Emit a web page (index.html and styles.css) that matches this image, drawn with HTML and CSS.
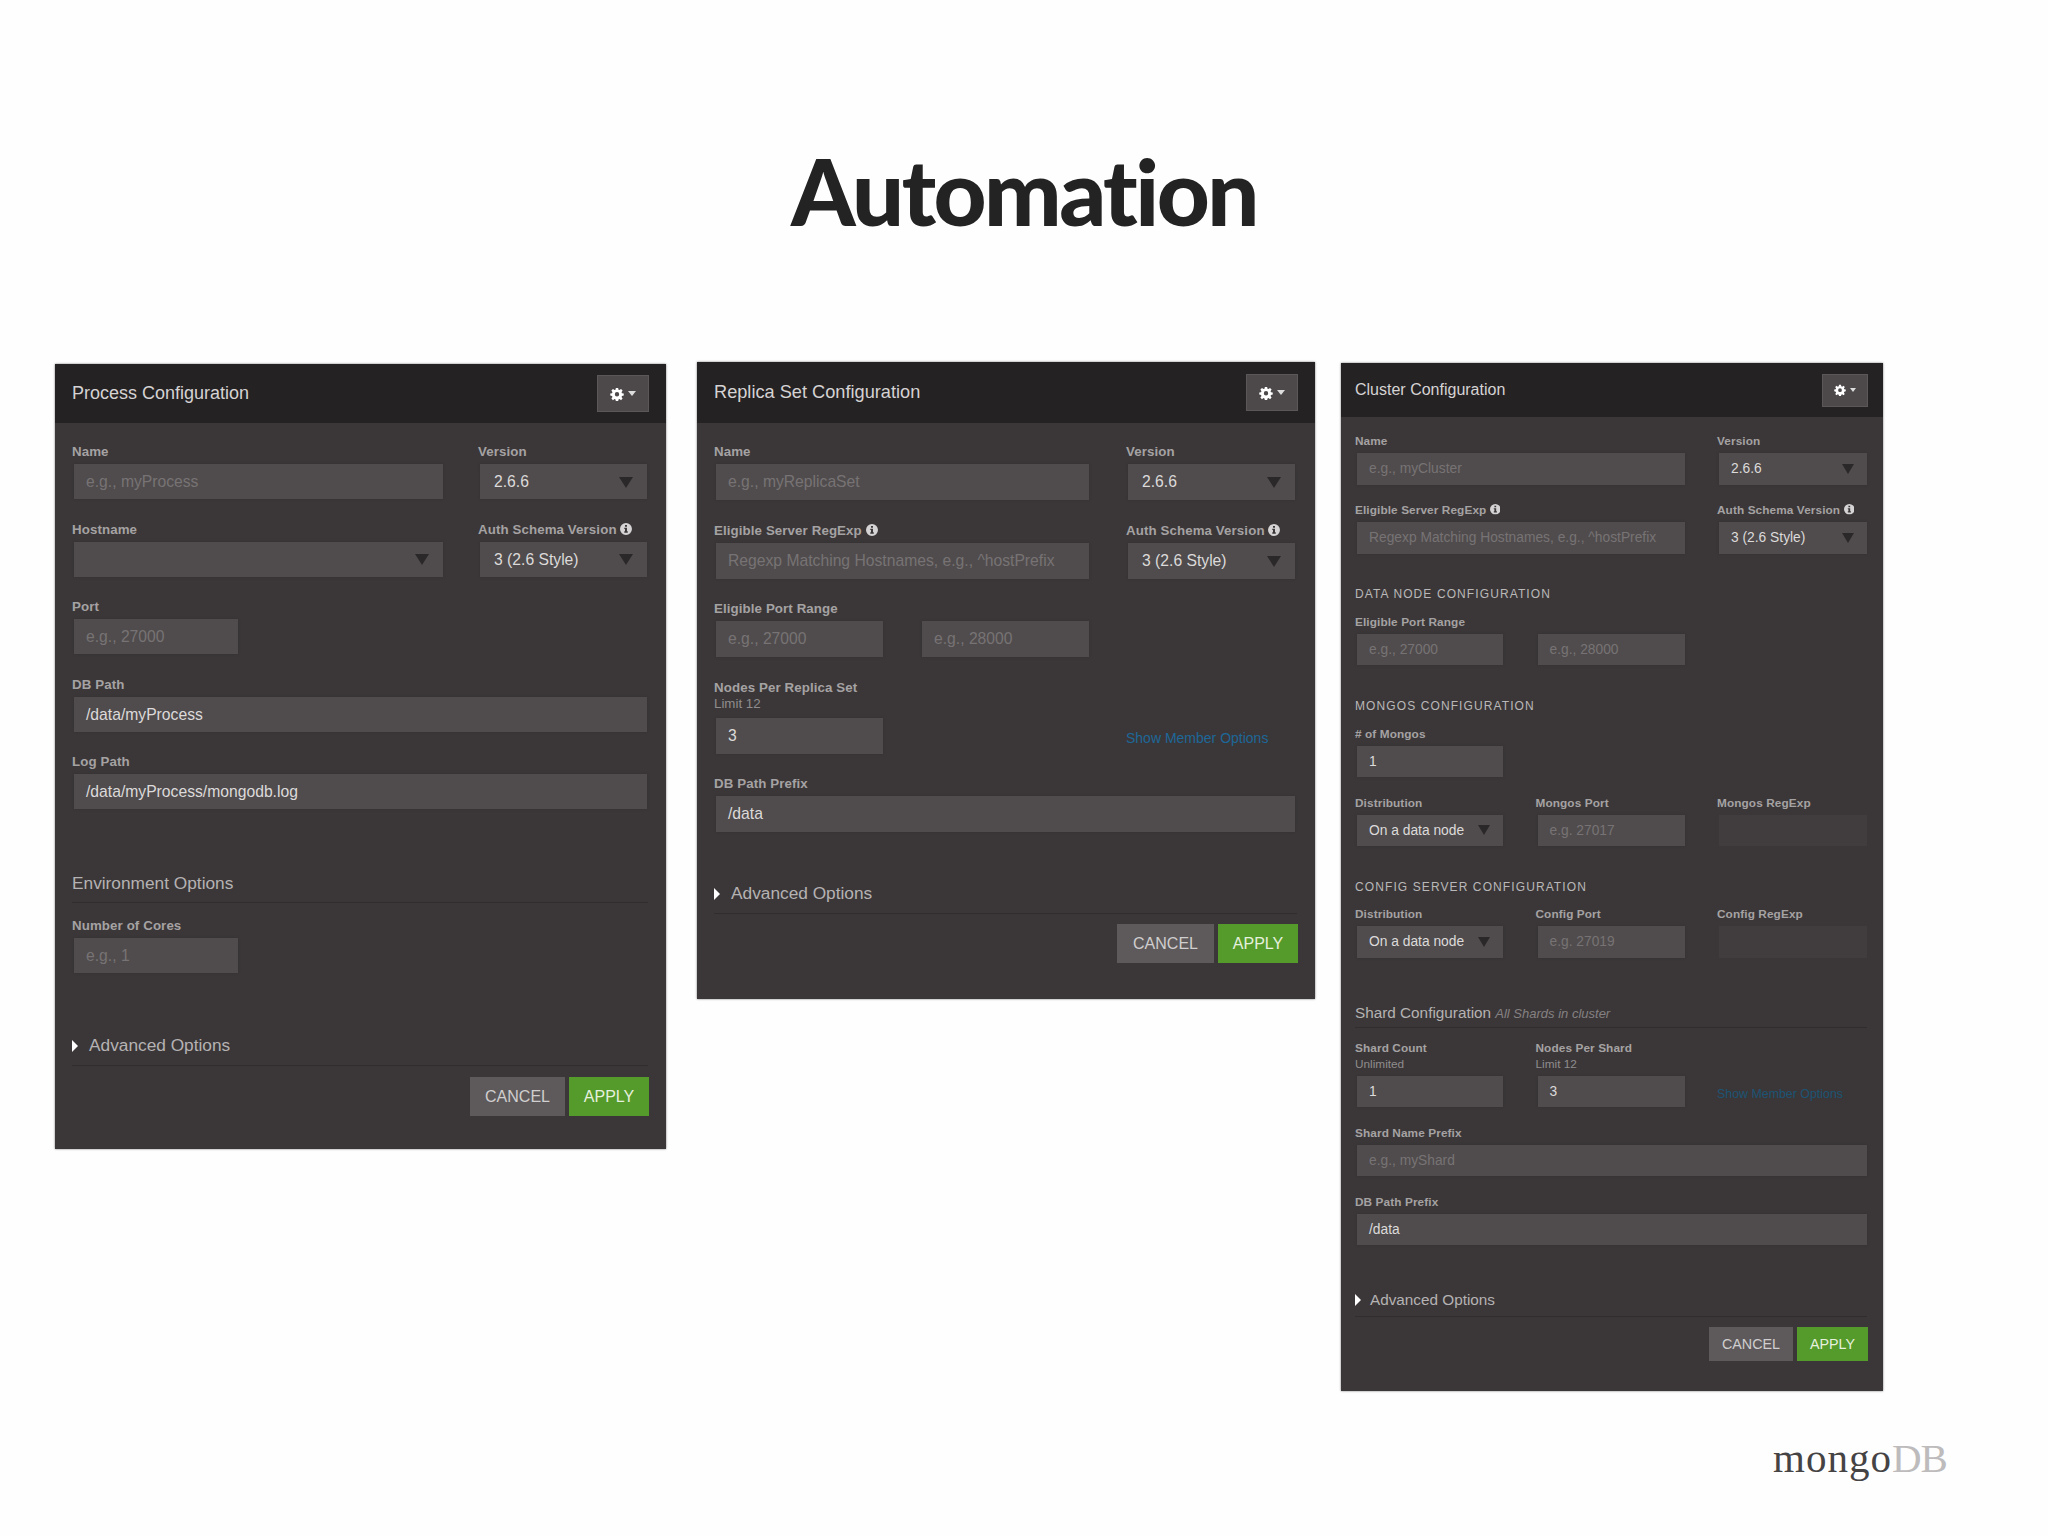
FILE: index.html
```html
<!DOCTYPE html>
<html lang="en">
<head>
<meta charset="UTF-8">
<meta name="viewport" content="width=device-width, initial-scale=1.0">
<title>Automation</title>
<link rel="stylesheet" href="styles.css">
</head>
<body>

<!-- shared icons -->
<svg class="defs" width="0" height="0">
  <symbol id="gear" viewBox="0 0 16 16">
    <path fill-rule="evenodd" d="M6.7 1h2.6l.4 2 1.2.5 1.7-1.2 1.8 1.8-1.2 1.8.5 1.1 2 .4v2.4l-2 .5-.5 1.2 1.2 1.7-1.8 1.8-1.7-1.2-1.2.5-.4 2H6.7l-.4-2-1.2-.5-1.7 1.2-1.8-1.8 1.2-1.7-.5-1.2-2-.5V7.4l2-.4.5-1.1L1.6 4.1l1.8-1.8 1.7 1.2L6.3 3zM8 5.8a2.5 2.5 0 1 0 0 5 2.5 2.5 0 0 0 0-5z"/>
  </symbol>
  <symbol id="info" viewBox="0 0 12 12">
    <path fill-rule="evenodd" d="M6 0a6 6 0 1 0 0 12A6 6 0 0 0 6 0zM5 2h2v1.7H5zM4.3 4.7H7v3.6h.8v1.4H4.3V8.3H5V6h-.7z"/>
  </symbol>
</svg>

<h1>Automation</h1>

<div class="panels">

  <div class="panel process">
    <div class="panel-header">
      <h2>Process Configuration</h2>
      <button class="gear-btn"><svg><use href="#gear"/></svg><span class="caret"></span></button>
    </div>
    <div class="panel-body">
      <div class="row">
        <div class="field span2"><label>Name</label><div class="input placeholder">e.g., myProcess</div></div>
        <div class="field"><label>Version</label><div class="input select">2.6.6</div></div>
      </div>
      <div class="row">
        <div class="field span2"><label>Hostname</label><div class="input select"></div></div>
        <div class="field"><label>Auth Schema Version <svg class="info"><use href="#info"/></svg></label><div class="input select">3 (2.6 Style)</div></div>
      </div>
      <div class="row">
        <div class="field"><label>Port</label><div class="input placeholder">e.g., 27000</div></div>
      </div>
      <div class="row">
        <div class="field span3"><label>DB Path</label><div class="input">/data/myProcess</div></div>
      </div>
      <div class="row">
        <div class="field span3"><label>Log Path</label><div class="input">/data/myProcess/mongodb.log</div></div>
      </div>
      <h3 class="section">Environment Options</h3>
      <div class="row">
        <div class="field"><label>Number of Cores</label><div class="input placeholder">e.g., 1</div></div>
      </div>
      <h3 class="advanced">Advanced Options</h3>
      <div class="actions">
        <button class="btn">CANCEL</button>
        <button class="btn apply">APPLY</button>
      </div>
    </div>
  </div>

  <div class="panel replica">
    <div class="panel-header">
      <h2>Replica Set Configuration</h2>
      <button class="gear-btn"><svg><use href="#gear"/></svg><span class="caret"></span></button>
    </div>
    <div class="panel-body">
      <div class="row">
        <div class="field span2"><label>Name</label><div class="input placeholder">e.g., myReplicaSet</div></div>
        <div class="field"><label>Version</label><div class="input select">2.6.6</div></div>
      </div>
      <div class="row">
        <div class="field span2"><label>Eligible Server RegExp <svg class="info"><use href="#info"/></svg></label><div class="input placeholder">Regexp Matching Hostnames, e.g., ^hostPrefix</div></div>
        <div class="field"><label>Auth Schema Version <svg class="info"><use href="#info"/></svg></label><div class="input select">3 (2.6 Style)</div></div>
      </div>
      <div class="row">
        <div class="field"><label>Eligible Port Range</label><div class="input placeholder">e.g., 27000</div></div>
        <div class="field"><label></label><div class="input placeholder">e.g., 28000</div></div>
      </div>
      <div class="row">
        <div class="field"><label>Nodes Per Replica Set</label><small>Limit 12</small><div class="input">3</div></div>
        <a class="link">Show Member Options</a>
      </div>
      <div class="row">
        <div class="field span3"><label>DB Path Prefix</label><div class="input">/data</div></div>
      </div>
      <h3 class="advanced">Advanced Options</h3>
      <div class="actions">
        <button class="btn">CANCEL</button>
        <button class="btn apply">APPLY</button>
      </div>
    </div>
  </div>

  <div class="panel cluster">
    <div class="panel-header">
      <h2>Cluster Configuration</h2>
      <button class="gear-btn"><svg><use href="#gear"/></svg><span class="caret"></span></button>
    </div>
    <div class="panel-body">
      <div class="row">
        <div class="field span2"><label>Name</label><div class="input placeholder">e.g., myCluster</div></div>
        <div class="field"><label>Version</label><div class="input select">2.6.6</div></div>
      </div>
      <div class="row">
        <div class="field span2"><label>Eligible Server RegExp <svg class="info"><use href="#info"/></svg></label><div class="input placeholder">Regexp Matching Hostnames, e.g., ^hostPrefix</div></div>
        <div class="field"><label>Auth Schema Version <svg class="info"><use href="#info"/></svg></label><div class="input select">3 (2.6 Style)</div></div>
      </div>
      <h4>DATA NODE CONFIGURATION</h4>
      <div class="row">
        <div class="field"><label>Eligible Port Range</label><div class="input placeholder">e.g., 27000</div></div>
        <div class="field"><label></label><div class="input placeholder">e.g., 28000</div></div>
      </div>
      <h4>MONGOS CONFIGURATION</h4>
      <div class="row">
        <div class="field"><label># of Mongos</label><div class="input">1</div></div>
      </div>
      <div class="row">
        <div class="field"><label>Distribution</label><div class="input select">On a data node</div></div>
        <div class="field"><label>Mongos Port</label><div class="input placeholder">e.g. 27017</div></div>
        <div class="field"><label>Mongos RegExp</label><div class="input disabled"></div></div>
      </div>
      <h4>CONFIG SERVER CONFIGURATION</h4>
      <div class="row">
        <div class="field"><label>Distribution</label><div class="input select">On a data node</div></div>
        <div class="field"><label>Config Port</label><div class="input placeholder">e.g. 27019</div></div>
        <div class="field"><label>Config RegExp</label><div class="input disabled"></div></div>
      </div>
      <h3 class="section">Shard Configuration <em>All Shards in cluster</em></h3>
      <div class="row">
        <div class="field"><label>Shard Count</label><small>Unlimited</small><div class="input">1</div></div>
        <div class="field"><label>Nodes Per Shard</label><small>Limit 12</small><div class="input">3</div></div>
        <a class="link">Show Member Options</a>
      </div>
      <div class="row">
        <div class="field span3"><label>Shard Name Prefix</label><div class="input placeholder">e.g., myShard</div></div>
      </div>
      <div class="row">
        <div class="field span3"><label>DB Path Prefix</label><div class="input">/data</div></div>
      </div>
      <h3 class="advanced">Advanced Options</h3>
      <div class="actions">
        <button class="btn">CANCEL</button>
        <button class="btn apply">APPLY</button>
      </div>
    </div>
  </div>

</div>

<div class="logo">mongo<span>DB</span></div>

</body>
</html>
```
FILE: styles.css
```css
* {
  box-sizing: border-box;
}

body {
  margin: 0;
  width: 2048px;
  height: 1536px;
  overflow: hidden;
  position: relative;
  background: #fefefe;
  font-family: "Liberation Sans", Arial, sans-serif;
}

.defs {
  position: absolute;
}

h1 {
  margin: 0;
  padding-top: 130px;
  height: 362px;
  text-align: center;
  font-family: Lato, sans-serif;
  font-size: 92px;
  font-weight: 900;
  line-height: 122px;
  letter-spacing: -2.5px;
  color: #232323;
}

.panels {
  display: flex;
  align-items: flex-start;
  padding-left: 55px;
}

.panel {
  --label: 25px;
  --control: 35px;
  --gap: 17.6px;
  --label-size: 13.3px;
  --text-size: 15.7px;
  --heading-size: 17.3px;
  background: #3b3738;
  box-shadow: 0 0 2px #777;
}

.process {
  width: 611px;
  height: 785px;
  margin: 2px 31px 0 0;
}

.replica {
  --control: 36px;
  --gap: 17.5px;
  width: 618px;
  height: 637px;
  margin-right: 26px;
}

.cluster {
  --label: 23px;
  --control: 31.5px;
  --gap: 14.5px;
  --label-size: 11.8px;
  --text-size: 13.8px;
  --heading-size: 15.3px;
  width: 542px;
  height: 1028px;
  margin-top: 1px;
}

.panel-header {
  display: flex;
  justify-content: space-between;
  align-items: center;
  height: 59px;
  padding: 0 17px;
  background: #252223;
}

.replica .panel-header {
  height: 61px;
}

.cluster .panel-header {
  height: 54px;
  padding: 0 15px 0 14px;
}

h2 {
  margin: 0;
  font-size: 18px;
  font-weight: normal;
  color: #d5d3d3;
}

.replica h2 {
  font-size: 18.2px;
}

.cluster h2 {
  font-size: 16px;
}

.gear-btn {
  display: flex;
  align-items: center;
  justify-content: center;
  gap: 4px;
  width: 52px;
  height: 37px;
  padding: 0;
  border: 1px solid #5b5758;
  background: #4d494a;
}

.gear-btn svg {
  width: 14px;
  height: 14px;
  fill: #fff;
}

.caret {
  border: 4px solid transparent;
  border-top: 5px solid #ddd;
  border-bottom: 0;
}

.cluster .gear-btn {
  width: 46px;
  height: 33px;
}

.cluster .gear-btn svg {
  width: 12px;
  height: 12px;
}

.cluster .caret {
  border-width: 4px 3px 0;
}

.panel-body {
  padding: 16px 18px 0 19px;
}

.cluster .panel-body {
  padding: 13px 16px 0;
}

.row {
  display: grid;
  grid-template-columns: 164px 164px 167px;
  column-gap: 39px;
  margin-bottom: var(--gap);
}

.replica .row {
  grid-template-columns: 167px 167px 167px;
  column-gap: 39px;
}

.cluster .row {
  grid-template-columns: 146px 147px 148px;
  column-gap: 34.5px;
}

.span2 {
  grid-column: span 2;
}

.process .span2 {
  width: 369px;
}

.span3 {
  grid-column: span 3;
}

label {
  display: block;
  height: var(--label);
  margin-left: -2px;
  line-height: var(--label);
  font-size: var(--label-size);
  font-weight: bold;
  letter-spacing: 0.1px;
  white-space: nowrap;
  color: #a5a2a3;
}

.info {
  width: 0.9em;
  height: 0.9em;
  vertical-align: -1px;
  fill: #d5d3d3;
}

small {
  display: block;
  height: 21px;
  margin: -3px 0 0 -2px;
  line-height: 14px;
  font-size: var(--label-size);
  color: #8f8c8d;
}

.cluster small {
  height: 18px;
  margin-top: -2px;
  line-height: 13px;
}

.input {
  position: relative;
  height: var(--control);
  padding-left: 12px;
  line-height: var(--control);
  font-size: var(--text-size);
  white-space: nowrap;
  background: #504c4d;
  box-shadow: 0 0 2px #322f30;
  color: #dcdada;
}

.placeholder {
  color: #777374;
}

.disabled {
  background: #413d3e;
  box-shadow: none;
}

.select {
  padding-left: 14px;
}

.cluster .select {
  padding-left: 12px;
}

.select::after {
  content: "";
  position: absolute;
  right: 14px;
  top: 50%;
  margin-top: -5px;
  border: 7px solid transparent;
  border-top: 11px solid #2b2829;
  border-bottom: 0;
}

.cluster .select::after {
  right: 13px;
  border-width: 10px 6px 0;
}

h3 {
  margin: 0 0 0 -2px;
  font-size: var(--heading-size);
  font-weight: normal;
  color: #b5b2b3;
  border-bottom: 1px solid #302d2e;
}

.process .section {
  height: 40px;
  margin-top: 54px;
  margin-bottom: 10px;
  line-height: 40px;
}

.cluster .section {
  height: 30px;
  margin-top: 40px;
  margin-bottom: 9px;
  line-height: 30px;
}

.section em {
  font-size: 13px;
  color: #858182;
}

.advanced {
  display: flex;
  align-items: center;
  gap: 11px;
  height: 40px;
  margin-bottom: 11px;
}

.advanced::before {
  content: "";
  border: 6px solid transparent;
  border-left: 6px solid #fff;
  border-right: 0;
}

.process .advanced {
  margin-top: 53px;
}

.replica .advanced {
  margin-top: 42px;
  margin-bottom: 10px;
}

.cluster .advanced {
  height: 34px;
  margin-top: 38px;
  margin-bottom: 10px;
  gap: 9px;
}

.actions {
  display: flex;
  justify-content: flex-end;
  gap: 4px;
  margin-right: -1px;
}

.btn {
  width: 95px;
  height: 39px;
  padding: 0;
  border: 0;
  font-family: inherit;
  font-size: 16px;
  background: #5e5a5b;
  color: #d0cece;
}

.apply {
  width: 80px;
  background: #559b2b;
  color: #e6f0de;
}

.replica .btn:not(.apply) {
  width: 97px;
}

.cluster .btn {
  width: 84px;
  height: 34px;
  font-size: 14.3px;
}

.cluster .apply {
  width: 71px;
}

h4 {
  margin: 29.5px 0 5.8px -2px;
  height: 22px;
  line-height: 22px;
  font-size: 12px;
  font-weight: normal;
  letter-spacing: 1.1px;
  color: #bab7b8;
}

.link {
  grid-column: 3;
  align-self: end;
  margin-left: -2px;
  height: 24px;
  font-size: 14px;
  white-space: nowrap;
  color: #1d6799;
}

.cluster .link {
  height: 20px;
  font-size: 12.4px;
  color: #1c5474;
}

.logo {
  position: absolute;
  left: 1773px;
  top: 1435px;
  font-family: "Liberation Serif", serif;
  font-size: 41px;
  line-height: 47px;
  letter-spacing: 1px;
  color: #454344;
}

.logo span {
  letter-spacing: -1px;
  color: #bdbbbc;
}
```
